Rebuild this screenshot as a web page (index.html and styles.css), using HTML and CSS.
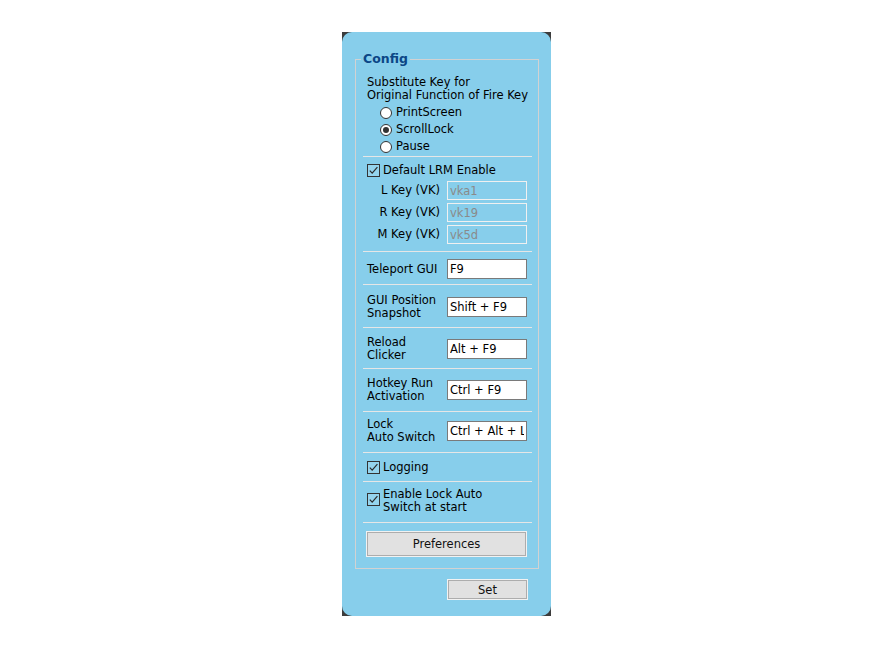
FILE: index.html
```html
<!DOCTYPE html>
<html>
<head>
<meta charset="utf-8">
<title>Config</title>
<link rel="stylesheet" href="styles.css">
</head>
<body>
<div class="frame">
  <div class="panel">
    <fieldset class="config">
      <legend>Config</legend>

      <div class="sec s1">
        <div class="desc">Substitute Key for<br>Original Function of Fire Key</div>
        <div class="radios">
          <div class="radio"><span class="rb"></span><span>PrintScreen</span></div>
          <div class="radio"><span class="rb on"></span><span>ScrollLock</span></div>
          <div class="radio"><span class="rb"></span><span>Pause</span></div>
        </div>
      </div>
      <div class="sep"></div>

      <div class="sec s2">
        <div class="check">
          <span class="cb"><svg viewBox="0 0 11 11" width="11" height="11"><path d="M1.8 5.6 L4.2 8.2 L9.4 2.2" fill="none" stroke="#2b2b2b" stroke-width="1.2"/></svg></span>
          <span>Default LRM Enable</span>
        </div>
        <div class="krow"><span class="klabel">L Key (VK)</span><input class="field off" type="text" value="vka1" disabled></div>
        <div class="krow"><span class="klabel">R Key (VK)</span><input class="field off" type="text" value="vk19" disabled></div>
        <div class="krow"><span class="klabel">M Key (VK)</span><input class="field off" type="text" value="vk5d" disabled></div>
      </div>
      <div class="sep"></div>

      <div class="sec s3">
        <div class="hrow one"><span class="hlabel">Teleport GUI</span><input class="field" type="text" value="F9"></div>
      </div>
      <div class="sep"></div>

      <div class="sec s4">
        <div class="hrow"><span class="hlabel">GUI Position<br>Snapshot</span><input class="field" type="text" value="Shift + F9"></div>
      </div>
      <div class="sep"></div>

      <div class="sec s5">
        <div class="hrow"><span class="hlabel">Reload<br>Clicker</span><input class="field" type="text" value="Alt + F9"></div>
      </div>
      <div class="sep"></div>

      <div class="sec s6">
        <div class="hrow"><span class="hlabel">Hotkey Run<br>Activation</span><input class="field" type="text" value="Ctrl + F9"></div>
      </div>
      <div class="sep"></div>

      <div class="sec s7">
        <div class="hrow"><span class="hlabel">Lock<br>Auto Switch</span><input class="field" type="text" value="Ctrl + Alt + L"></div>
      </div>
      <div class="sep"></div>

      <div class="sec s8">
        <div class="check">
          <span class="cb"><svg viewBox="0 0 11 11" width="11" height="11"><path d="M1.8 5.6 L4.2 8.2 L9.4 2.2" fill="none" stroke="#2b2b2b" stroke-width="1.2"/></svg></span>
          <span>Logging</span>
        </div>
      </div>
      <div class="sep"></div>

      <div class="sec s9">
        <div class="check two">
          <span class="cb"><svg viewBox="0 0 11 11" width="11" height="11"><path d="M1.8 5.6 L4.2 8.2 L9.4 2.2" fill="none" stroke="#2b2b2b" stroke-width="1.2"/></svg></span>
          <span>Enable Lock Auto<br>Switch at start</span>
        </div>
      </div>
      <div class="sep"></div>

      <div class="sec s10">
        <button class="btn pref" type="button">Preferences</button>
      </div>
    </fieldset>

    <div class="actions">
      <button class="btn set" type="button">Set</button>
    </div>
  </div>
</div>
</body>
</html>
```

FILE: styles.css
```css
html, body {
  margin: 0;
  padding: 0;
  background: #ffffff;
}

body {
  display: flex;
  justify-content: center;
  padding-top: 32px;
  font-family: "DejaVu Sans", Verdana, sans-serif;
  font-size: 11.5px;
  color: #000;
}

.frame {
  width: 209px;
  height: 584px;
  background: #3c3c3c;
}

.panel {
  box-sizing: border-box;
  height: 100%;
  background: #87ceeb;
  border-radius: 10px;
  padding: 19px 13px 0 13px;
}

.config {
  box-sizing: border-box;
  width: 184px;
  min-width: 0;
  margin: 0;
  padding: 0 6px 0 7px;
  border: 1px solid #d2d2d2;
  border-radius: 0;
}

.config legend {
  margin-left: -2px;
  padding: 0 2px;
  font-size: 12.5px;
  line-height: 16px;
  font-weight: bold;
  color: #0b4686;
}

.sep {
  height: 1px;
  background: #e6e6e6;
}

.sec {
  padding-left: 4px;
  padding-right: 5px;
  line-height: 13px;
  white-space: nowrap;
}

/* section 1 */
.s1 { padding-top: 9px; padding-bottom: 1px; }
.desc { line-height: 13px; }
.radios {
  margin-top: 2px;
  padding-left: 13px;
  display: flex;
  flex-direction: column;
}
.radio {
  height: 17px;
  display: flex;
  align-items: center;
  gap: 4px;
}
.rb {
  box-sizing: border-box;
  width: 12px;
  height: 12px;
  border: 1px solid #333;
  border-radius: 50%;
  background: #fff;
  display: flex;
  align-items: center;
  justify-content: center;
}
.rb.on::after {
  content: "";
  width: 6px;
  height: 6px;
  border-radius: 50%;
  background: #333;
}

/* checkboxes */
.check {
  height: 16px;
  display: flex;
  align-items: center;
  gap: 3px;
}
.check.two {
  height: 26px;
  align-items: flex-start;
}
.check.two .cb { margin-top: 5px; }
.cb {
  box-sizing: border-box;
  flex: none;
  width: 13px;
  height: 13px;
  border: 1px solid #333;
  background: rgba(255, 255, 255, 0.12);
  display: flex;
  align-items: center;
  justify-content: center;
}
.cb svg { display: block; }

/* section 2 */
.s2 { padding-top: 5px; padding-bottom: 7px; }
.krow {
  margin-top: 3px;
  height: 19px;
  display: flex;
  align-items: center;
}
.klabel {
  width: 80px;
  box-sizing: border-box;
  padding-right: 7px;
  text-align: right;
}

/* inputs */
.field {
  box-sizing: border-box;
  width: 80px;
  height: 20px;
  margin: 0;
  padding: 0 2px;
  border: 1px solid #7a7a7a;
  border-radius: 0;
  background: #fff;
  color: #000;
  font-family: "DejaVu Sans", Verdana, sans-serif;
  font-size: 11.5px;
  outline: none;
}
.field.off {
  height: 19px;
  background: #87ceeb;
  border-color: #f0f0f0;
  color: #8a8a8a;
  -webkit-text-fill-color: #8a8a8a;
  opacity: 1;
}

.hrow {
  height: 26px;
  display: flex;
  align-items: center;
}
.hrow.one { height: 20px; }
.hlabel {
  width: 80px;
  flex: none;
}

.s3 { padding-top: 7px; padding-bottom: 5px; }
.s4 { padding-top: 9px; padding-bottom: 7px; }
.s5 { padding-top: 8px; padding-bottom: 6px; }
.s6 { padding-top: 8px; padding-bottom: 8px; }
.s7 { padding-top: 6px; padding-bottom: 8px; }
.s8 { padding-top: 6px; padding-bottom: 6px; }
.s9 { padding-top: 6px; padding-bottom: 8px; }
.s10 { padding-top: 9px; padding-bottom: 12px; }

/* buttons */
.btn {
  box-sizing: border-box;
  margin: 0;
  padding: 0;
  border: 1px solid #adadad;
  box-shadow: 0 0 0 1px #f2f2f2;
  border-radius: 0;
  background: #e1e1e1;
  color: #111;
  font-family: "DejaVu Sans", Verdana, sans-serif;
  font-size: 11.5px;
}
.pref {
  display: block;
  width: 159px;
  height: 24px;
}

.actions {
  display: flex;
  justify-content: flex-end;
  padding-top: 11px;
  padding-right: 11px;
}
.set {
  width: 79px;
  height: 19px;
}
```
